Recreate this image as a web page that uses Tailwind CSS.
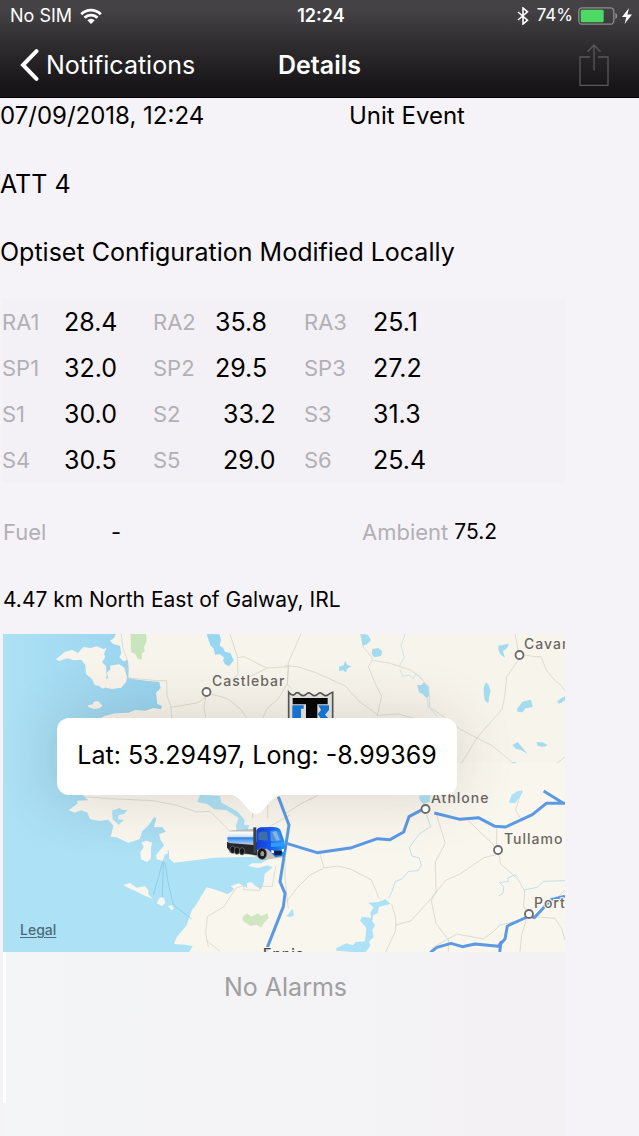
<!DOCTYPE html>
<html lang="en">
<head>
<meta charset="utf-8">
<meta name="viewport" content="width=device-width, initial-scale=1">
<title>Details</title>
<script src="https://cdn.jsdelivr.net/npm/@tailwindcss/browser@4"></script>
</head>
<body class="min-h-screen bg-[#f5f3f7] font-['Inter',sans-serif] text-[24px] text-black flex flex-col">
<header class="bg-linear-to-b from-[#444245] from-10% to-[#171518] to-90% text-white h-[98px] flex flex-col border-b border-black">
  <div class="h-8 grid grid-cols-[1fr_auto_1fr] items-center pl-[10px] pr-[7px] text-[17px]">
    <div class="flex items-center gap-2">
      <span class="text-[18px]">No SIM</span>
      <svg class="w-[22px] h-4" viewBox="0 0 22 16" fill="none" stroke="#fff" stroke-width="2.9"><path d="M1.2 6.2a13.8 13.8 0 0 1 19.6 0"/><path d="M4.6 9.8a9 9 0 0 1 12.8 0"/><path d="M7.3 12.2a5.2 5.2 0 0 1 7.4 0L11 16z" fill="#fff" stroke="none"/></svg>
    </div>
    <span class="font-semibold text-[18px]">12:24</span>
    <div class="flex items-center justify-end">
      <svg class="w-3 h-[18px] mr-2" viewBox="0 0 12 18" fill="none" stroke="#fff" stroke-width="1.6"><path d="M1 5l9.500 8.200L6 17V1l4.500 3.800L1 13"/></svg>
      <span class="mr-[5px]">74%</span>
      <svg class="w-10 h-[18px] mr-1" viewBox="0 0 40 18"><rect x=".8" y=".8" width="35" height="16.400" rx="3.500" fill="none" stroke="#8d8c8e" stroke-width="1.300"/><rect x="2.700" y="2.700" width="23" height="12.600" rx="1.500" fill="#4cd964"/><path d="M37.300 6q2 .6 2 3t-2 3z" fill="#8d8c8e"/></svg>
      <svg class="w-[10px] h-4" viewBox="0 0 10 16" fill="#fff"><path d="M7 0L0 9h4.300L2.600 16 10 6.600H5.400z"/></svg>
    </div>
  </div>
  <nav class="h-[66px] grid grid-cols-[1fr_auto_1fr] items-center pl-5 pr-[30px] pt-0.5">
    <button class="flex items-center gap-[7px] justify-self-start text-[25px]">
      <svg class="w-[19px] h-8" viewBox="0 0 19 32" fill="none" stroke="#fff" stroke-width="4" stroke-linecap="round" stroke-linejoin="miter"><path d="M16.500 2.200L3 16l13.500 13.800"/></svg>
      <span>Notifications</span>
    </button>
    <h1 class="font-semibold text-[25px] pl-[10px]">Details</h1>
    <button class="justify-self-end" aria-label="Share">
      <svg class="w-[30px] h-[42px]" viewBox="0 0 30 42" fill="none" stroke="#5a585b" stroke-width="1.300"><path d="M11 13H1v28.300h28V13H19M15 26.500V1M8.500 7.800L15 1l6.500 6.800"/></svg>
    </button>
  </nav>
</header>
<main class="flex-1 flex flex-col">
  <div class="h-9 grid grid-cols-[349fr_290fr] items-center">
    <p>07/09/2018, 12:24</p><p>Unit Event</p>
  </div>
  <p class="mt-[33px] h-9 flex items-center text-[25px]">ATT 4</p>
  <p class="mt-8 h-9 flex items-center text-[25px]">Optiset Configuration Modified Locally</p>
  <table class="mt-7 ml-0.5 mr-[74px] table-fixed border-collapse bg-[#f3f1f5] text-left text-[25px] [&_td]:px-0 [&_td]:pb-0 [&_td]:pt-0.5 [&_th]:p-0 [&_th]:font-normal [&_th]:text-[22px] [&_th]:text-[#b2b0b4] [&_tr]:h-[46px]">
    <colgroup><col class="w-[62px]"><col class="w-[89px]"><col class="w-[62px]"><col class="w-[89px]"><col class="w-[69px]"><col></colgroup>
    <tbody>
    <tr><th scope="row">RA1</th><td>28.4</td><th scope="row">RA2</th><td>35.8</td><th scope="row">RA3</th><td>25.1</td></tr>
    <tr><th scope="row">SP1</th><td>32.0</td><th scope="row">SP2</th><td>29.5</td><th scope="row">SP3</th><td>27.2</td></tr>
    <tr><th scope="row">S1</th><td>30.0</td><th scope="row">S2</th><td><span class="pl-2">33.2</span></td><th scope="row">S3</th><td>31.3</td></tr>
    <tr><th scope="row">S4</th><td>30.5</td><th scope="row">S5</th><td><span class="pl-2">29.0</span></td><th scope="row">S6</th><td>25.4</td></tr>
    </tbody>
  </table>
  <div class="mt-[31px] h-9 grid grid-cols-[108fr_251fr_277fr] items-center pl-[3px] text-[22px]">
    <span class="text-[#b2b0b4]">Fuel</span><span>-</span>
    <span class="flex items-center gap-[6px]"><span class="text-[#b2b0b4]">Ambient</span><span class="text-[21px]">75.2</span></span>
  </div>
  <p class="mt-8 h-9 flex items-center pl-[3px] text-[21px]">4.47 km North East of Galway, IRL</p>
  <section class="relative mt-4 ml-[3px] mr-[74px] h-[318px] overflow-hidden" aria-label="Map">
    <svg class="absolute inset-0 w-full h-full" viewBox="3 634 562 318" preserveAspectRatio="xMinYMin slice">
      <defs>
        <linearGradient id="sea" x1="0" y1="0" x2="1" y2="0"><stop offset="0" stop-color="#ade1f5"/><stop offset=".3" stop-color="#96d1ee"/><stop offset="1" stop-color="#96d1ee"/></linearGradient>
        <linearGradient id="seaLow" x1="0" y1="0" x2="0" y2="1"><stop offset=".45" stop-color="#ade1f5" stop-opacity="0"/><stop offset=".7" stop-color="#ade1f5"/></linearGradient>
        <linearGradient id="tank" x1="0" y1="0" x2="0" y2="1"><stop offset="0" stop-color="#999"/><stop offset=".2" stop-color="#fff"/><stop offset=".45" stop-color="#dbe7f5"/><stop offset=".55" stop-color="#2c7fe8"/><stop offset=".68" stop-color="#5fa4f5"/><stop offset="1" stop-color="#cfd6de"/></linearGradient>
        <linearGradient id="cab" x1="0" y1="0" x2="1" y2="0"><stop offset="0" stop-color="#123fd8"/><stop offset=".45" stop-color="#1757f0"/><stop offset="1" stop-color="#1fa0ff"/></linearGradient>
      </defs>
      <rect x="3" y="634" width="562" height="318" fill="url(#sea)"/>
      <rect x="3" y="634" width="562" height="318" fill="url(#seaLow)"/>
      <!-- north-west -->
      <g transform="translate(0 625) scale(.33333)">
        <g fill="#f7f4ec">
          <path d="M348 27l-6 12-12 8 10 10 20 6 4 22-6 12 12 12 14-4 2 28-2 26 20 4 34 4 40 4 4 18-14 14 4 34 14 6-4 10-22-4-24 8-30-2-20 8-40 2-34 8-50 40v150h1500V27z"/>
          <path d="M170 101l24-20 22-7 18 10 16-18 22 3 18-5 20 8 10-3-8 17 4 10-10 15 12 12 2 30-4 35-8 3-12-9-12-2-8-18-18-15-2-27-12-16-24 2-16-6-28 8-8-6z"/>
          <path d="M330 122l28-4 15 10 8 28-3 16-14 16-28 4-18-4-5-8 4-16 8-6-5-14 12-12z"/>
          <path d="M264 241l14-3 4-8 12-2 14 14-10 8-16 2-16-5z"/>
        </g>
        <path d="M392 27h46l2 20-8 20 2 12-8 6-1 20-12-4-8-15-12-5z" fill="#c8e5bd"/>
        <path d="M620 27l38 1 5 16-4 18 10 6 6 12 16 4 10 22-14 18-12-6-6-12 4-8-14-10-14 1-4-18-10-10z" fill="#98d7f2"/>
        <g fill="none" stroke="#cfd0bd" stroke-width="2">
          <path d="M364 27l4 40 12 30 5 62 45 4 40 4h30l1 45 12 33 2 40M514 247l80-14 24-18M632 208q40 6 60 20l30 25 20 28M617 216l-5 30 6 35M690 27l22 68 2 55-24 15M712 98l20-3 40 20 28 14 70-4M800 130l-50 25M866 125l-4 50-26 45-34 30-14 30"/>
        </g>
      </g>
      <!-- north-east -->
      <g transform="translate(285 625) scale(.33333)">
        <path d="M48 27l-18 40-20 45-3 66 12 14M0 121l40 5 50 16 90 40 40 45 60 44 60-4 70 20M226 27l10 40 24 30 2 9 50 8 62 20 30 20 28 32 2 60 40 28 50 38 62 32 36 18 60 50 50 40 26 42 30 18 24 20M262 106l-12 18 20 50 20 40-14 60M690 27l12 60 48 8 18 0 16 40 24 30 20 16 20 28 10 10M700 105l-35 50-6 60-8 38-74 84-60 98M732 464l60-30 48-38M728 470l-24 40" fill="none" stroke="#cfd0c2" stroke-width="2"/>
        <path d="M360 27l-12 35 10 35-14 25M345 135l8 18 22-2 10 10 8-14 16 14M425 185l4 60 28 28" fill="none" stroke="#b9dce4" stroke-width="2"/>
        <g fill="#a5dbf0">
          <path d="M228 27l20 2 10 16-14 14-12 2zM262 72l18-3 12 10-4 14-20 4-8-10zM162 125l14-4 4-13 7 12 13 4-12 6-6 12-8-6-12 2zM396 180l14 0 6-8 14 14 2 26-8 6-12-12-10-4zM603 172l8 8 6 18-4 14-3 22-10-6-3-16-1-24zM696 252l16-22 26-6 5 22-22 4-8 12-16-2zM816 230l12-10 12-6v12l-16 10zM682 360l16-9 12 14 18 22-20-12-16-4zM754 352h18l16 8-12 6-18-4zM678 415l12-4 16 14-2 20-12 2-12-10zM678 510l14-14 14-3-10 18zM640 62l32-6-6 14-12 8 6 20-12-8-8-14z"/>
        </g>
      </g>
      <!-- south-west -->
      <g transform="translate(0 790) scale(.33333)">
        <path d="M300-80L250 18l15 13-33 1v9l-26 20 18 7 20-7 18 7 8 20 30 5 25-4 15 18-8 33 18 2 35 17 34-12 8-23 20-20 15-22 7 3-7 27 25-1 10 14-20 8 5 17 10 15-3 10 18 7v23l15 13 50-6 70-9 120-3 40 8-18 12-28 0-12 8 30 6 28-8 16 6-24 20-2 22-8 24-18-10-12-12-14 4 2 14-26-14-24 8 10 8-8 10-12 6-40-14-22-6-14 22-20 34-10 12-16 46-30 36-8 20 34 2 22 4-18 32h1200V-80z" fill="#f9f6ee"/>
        <path d="M425 157l14-5 18 6-4 12 0 36-12 10-18-8-2-22 10-14zM468 196l20-26 14 6 2 14-10 4-6 18-18-4zM370 285l20-6 20 14 24-4 12 12-2 10 14 16-28-12-24-12-22-10zM470 340l10-18 12 2 4 14-10 10zM504 348l12-2 6 10-8 5z" fill="#f9f6ee"/>
        <g fill="#ade1f5">
          <path d="M336 62l22-8 10 6 14 0-10 12-16 4-2 12 18 2-16 14-18-16z"/>
          <path d="M600 14l60 4 4 20 26 14 24 14 20 24-2 14 16 2-8 22-18-6-12 4-2-20 8-22-38-24-36-2-20-16-30-6z"/>
        </g>
        <path d="M728 380l14-10 12 10 20-10 10 8 18-8 4 14-14 14-8 14-16-8-16 4-24-16z" fill="#cfe6c0"/>
        <path d="M488 215l-12 45-16 55M490 215l-3 105M494 215l12 70 14 60 55 42" fill="none" stroke="#7cc4e6" stroke-width="2"/>
        <path d="M250 20l80 6 130 6 70 14 60 20 40-2 45 45 40 40M758 85V60M803 85V45M800 115l70-40M625 470l-8-40 5-50 50-30 35-55 24-8 0 12 48 2-2-12 40 0 10-60M620 452l40 32" fill="none" stroke="#cfd0c2" stroke-width="2"/>
      </g>
      <!-- south-east -->
      <g transform="translate(285 790) scale(.33333)">
        <path d="M0 72l50-32 50-24M105 192l12 42 42-6 40 10 60 32 24 56M115 235l-40 20-40 40-30 40M320 342l12 40v40l-30 64M332 405l45-12 55-60 50-62 45-20 70-48 50-12M455 75l26 85-30 55 2 90-14 26 14 70 34 44M550 92l75 72 20 40 0 16 54 48 20 35-3 45 14 30M635 110v55M710 0l-18 60 20 35M725 385l-15 50-5 50M745 380l65 5 20 30 10 35M440 475l75-43 80 15 30-22 20-20 60-14M490 445v40M795 345l45-45M0 205v60l10 90" fill="none" stroke="#d0cbc0" stroke-width="2"/>
        <path d="M425 75l12 35-32 20-10 12-22 30 8 26 22 6 6 22-10 16-28 2-22 24-18 6-10 30-10 20M700 262l-10-8-22 10 2 10-26 4 12 12-2 20-14 8M716 300l40-8 20-18 64-2" fill="none" stroke="#b5dbe8" stroke-width="2.500"/>
        <path d="M250 338l30-2 22-8 14 14-34 8-4 20-14 6-2 18 8 12-8 14 4 22-14 12 4 14-14 18-40 0-48-4 0-8 30-14 20 6 8-10 28-2 4-40-18-22 4-12 28 4-2-16 10-16zM402 16h34l-2 20-20 6-10-12zM672 38l8-24 20-12 14 2-8 14-16 22zM5 378l18-22 4 20-12 6z" fill="#ade1f5"/>
        <g fill="none" stroke="#5b99e4" stroke-width="9" stroke-linejoin="round">
          <path d="M-20 20L12 105-15 275 0 310-5 350-58 485M5 160l91 28 104-15 77-27 38 3 41-23 16-46 45-24M448 69l77 19 55-5 50 26 32 2 80-37 42-34h56M776 3l58 36M436 487l20-15 42-12 34 10 38-8 70 7 20-22 7-39 66-30 15 5 50-54 42-10M640 469l8-12-4 29"/>
        </g>
      </g>
      <g fill="#fff" stroke="#6d6b68" stroke-width="1.800"><circle cx="206.500" cy="692" r="4"/><circle cx="519.500" cy="655" r="4"/><circle cx="425.500" cy="809" r="4"/><circle cx="498" cy="850" r="4"/><circle cx="529" cy="914" r="4"/></g>
      <g font-family="Inter, sans-serif" font-size="14" font-weight="500" letter-spacing="1" fill="#6a6661" stroke="#faf7f0" stroke-width="2" paint-order="stroke">
        <text x="212" y="686">Castlebar</text><text x="524" y="649">Cavan</text><text x="431" y="803">Athlone</text><text x="504" y="844">Tullamo</text><text x="534" y="908">Port</text><text x="263" y="959" fill="#444">Ennis</text>
      </g>
      <!-- depot stamp -->
      <g transform="translate(285 625) scale(.33333)">
        <path d="M11 202q9 12 18 6 8-10 17 0 8 8 17 0 8-8 17 0 8 8 17 0 8-8 17 0 8 8 17 0 6-4 12-6v140H11z" fill="#e8e7e4" stroke="#555" stroke-width="5"/>
        <path d="M22 241h34v10h-8v50H22zM100 241h32v14l-12 14 12 12v20h-32l-6-16 12-6-8-12 10-12z" fill="#1478dc"/>
        <path d="M23 219h105v19H97v64H63v-64H23z" fill="#050505"/>
      </g>
      <!-- tanker truck -->
      <g transform="translate(215 790) scale(.33333)">
        <path d="M40 158l80 2 84-4 12 16-10 30-60 8-32-14-72-8z" fill="#5f6268" opacity=".35"/>
        <path d="M36 156h90v40l-20-3-60-8-10-12z" fill="#27282b"/>
        <path d="M42 127q2-6 10-6l66-3v47l-76-6q-5-2-5-16 1-11 5-16z" fill="url(#tank)"/>
        <path d="M115 112h9v78h-9z" fill="#3d4149"/>
        <path d="M124 122q2-8 12-10l38-1q18 1 22 8l12 34 3 30-4 14-26 5-16-18-10-8-31 4z" fill="url(#cab)"/>
        <path d="M130 128q16-6 26-2l3 26-29-2z" fill="#3f6fae"/><path d="M166 124q18-6 26 2l8 26q-16 4-33 2z" fill="#4f93dd"/><path d="M172 126l12-2 10 26-10 2z" fill="#7fbaf2"/>
        <path d="M168 158l38-2v12l-38 3z" fill="#2f9cff"/><path d="M176 182h26l-3 14h-20z" fill="#12203c"/><path d="M169 180l8 2v8l-8-2zM200 178l7-2v8l-6 2z" fill="#fff"/>
        <g fill="#15161a" stroke="#777" stroke-width="2"><ellipse cx="53" cy="179" rx="8" ry="11"/><ellipse cx="66" cy="182" rx="8" ry="11"/><ellipse cx="81" cy="184" rx="8" ry="11"/><ellipse cx="141" cy="191" rx="14" ry="17"/></g><ellipse cx="142" cy="191" rx="6" ry="8" fill="#999"/>
      </g>
    </svg>
    <div class="absolute left-[54px] top-[84px] w-[400px] h-[77px] rounded-xl bg-white shadow-[0_0_60px_rgba(60,50,30,0.16)] flex items-center justify-center pb-0.5 text-[25px] whitespace-nowrap">
      Lat: 53.29497, Long: -8.99369
      <svg class="absolute top-full left-[172px] w-[54px] h-5 -mt-px" viewBox="0 0 54 20" fill="#fff"><path d="M0 0q7 1 13 8l8 9q6 6 12 0l8-9q6-7 13-8z"/></svg>
    </div>
    <a href="#" class="absolute left-[17px] bottom-3 text-[14px] leading-5 font-medium text-[#4c6b7b] underline underline-offset-2">Legal</a>
  </section>
  <section class="ml-[3px] mr-[74px] flex-1 bg-linear-to-r from-[#f4f5f6] to-[#f3f1f4] flex">
    <div class="w-[3px] h-[151px] bg-white"></div>
    <p class="flex-1 pt-[17px] text-center text-[25px] leading-9 text-[#a09ea1]">No Alarms</p>
  </section>
</main>
</body>
</html>
